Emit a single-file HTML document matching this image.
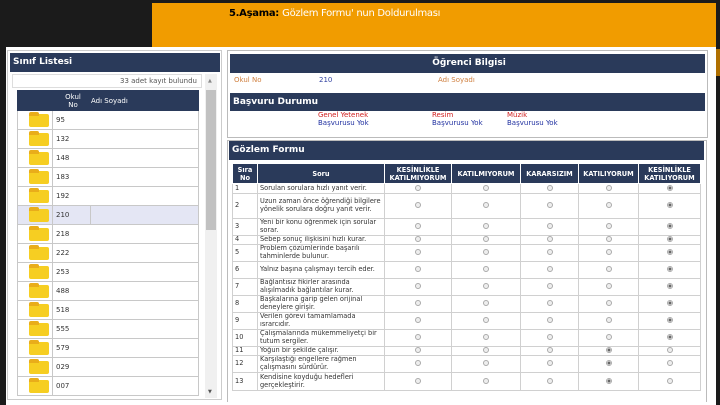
<!DOCTYPE html>
<html><head><meta charset="utf-8"><style>
*{margin:0;padding:0;box-sizing:border-box}
body{width:720px;height:405px;overflow:hidden;background:#1b1b1b;font-family:"DejaVu Sans","Liberation Sans",sans-serif;position:relative}
.abs{position:absolute}
.orange{left:152px;top:3px;width:564px;height:46px;background:#f19c00}
.title{left:229px;top:8px;font-size:10px;font-weight:bold;color:#000;letter-spacing:-0.3px}
.title span{color:#fff;font-weight:normal}
.white{left:6px;top:47px;width:710px;height:358px;background:#fff}
.hdr{background:#2a3a5a;color:#fff;font-weight:bold;font-size:9px;padding-left:3px;line-height:19px}
table{border-collapse:collapse}
.list td{border:1px solid #c8c8c8;height:19px;font-size:7px;color:#333;padding-left:3px}
.folder{width:20px;height:13px;background:#f6ce22;border-radius:2px;margin-left:8px;position:relative}
.folder:before{content:"";position:absolute;left:0;top:-2px;width:10px;height:4px;background:#e9ad1a;border-radius:2px 2px 0 0}
.form{table-layout:fixed}
.form td,.form th{border:1px solid #d0d0d0;font-size:6.6px;line-height:7.6px;color:#333;padding:0 2px;overflow:hidden}
.form th{background:#2a3a5a;color:#fff;font-weight:bold;border-color:#fff;line-height:8px}
.form td.r{text-align:center}
.rad{display:inline-block;width:6px;height:6px;border:1px solid #aaa;border-radius:50%;background:#eee;vertical-align:middle}
.rad.on{background:radial-gradient(circle,#666 0 1.3px,#eee 1.6px)}
</style></head><body>
<div class="abs orange"></div>
<div class="abs title">5.Aşama: <span>Gözlem Formu' nun Doldurulması</span></div>
<div class="abs white"></div>
<div class="abs" style="left:716px;top:49px;width:4px;height:27px;background:#b07000"></div>

<div class="abs" style="left:7px;top:50px;width:215px;height:350px;border:1px solid #ccc"></div>
<div class="abs hdr" style="left:10px;top:53px;width:210px;height:19px">Sınıf Listesi</div>
<div class="abs" style="left:12px;top:74px;width:190px;height:14px;border:1px solid #ddd;font-size:7px;color:#555;text-align:right;padding-right:4px;line-height:13px">33 adet kayıt bulundu</div>
<div class="abs" style="left:205px;top:74px;width:12px;height:324px;background:#f0f0f0"></div>
<div class="abs" style="left:206px;top:90px;width:10px;height:140px;background:#c1c1c1"></div>
<div class="abs" style="left:208px;top:78px;font-size:5px;color:#888">▲</div>
<div class="abs" style="left:208px;top:389px;font-size:5px;color:#555">▼</div>
<table class="abs list" style="left:17px;top:90px;width:182px">
<tr style="background:#2a3a5a;color:#fff"><td style="width:35px;height:20px;border-color:#2a3a5a"></td><td style="width:38px;color:#fff;text-align:center;line-height:8px;border-color:#2a3a5a">Okul<br>No</td><td style="color:#fff;padding-left:0;border-color:#2a3a5a">Adı Soyadı</td></tr>
<tr><td><div class="folder"></div></td><td colspan="2">95</td></tr>
<tr><td><div class="folder"></div></td><td colspan="2">132</td></tr>
<tr><td><div class="folder"></div></td><td colspan="2">148</td></tr>
<tr><td><div class="folder"></div></td><td colspan="2">183</td></tr>
<tr><td><div class="folder"></div></td><td colspan="2">192</td></tr>
<tr style="background:#e4e6f4"><td><div class="folder"></div></td><td>210</td><td></td></tr>
<tr><td><div class="folder"></div></td><td colspan="2">218</td></tr>
<tr><td><div class="folder"></div></td><td colspan="2">222</td></tr>
<tr><td><div class="folder"></div></td><td colspan="2">253</td></tr>
<tr><td><div class="folder"></div></td><td colspan="2">488</td></tr>
<tr><td><div class="folder"></div></td><td colspan="2">518</td></tr>
<tr><td><div class="folder"></div></td><td colspan="2">555</td></tr>
<tr><td><div class="folder"></div></td><td colspan="2">579</td></tr>
<tr><td><div class="folder"></div></td><td colspan="2">029</td></tr>
<tr><td><div class="folder"></div></td><td colspan="2">007</td></tr>
</table>

<div class="abs" style="left:227px;top:50px;width:481px;height:88px;border:1px solid #bbb"></div>
<div class="abs hdr" style="left:230px;top:54px;width:475px;height:19px;text-align:center">Öğrenci Bilgisi</div>
<div class="abs" style="left:234px;top:76px;font-size:7px;color:#d08040">Okul No</div>
<div class="abs" style="left:319px;top:76px;font-size:7px;color:#3040a0">210</div>
<div class="abs" style="left:438px;top:76px;font-size:7px;color:#d08040">Adı Soyadı</div>
<div class="abs hdr" style="left:230px;top:93px;width:475px;height:18px;line-height:18px">Başvuru Durumu</div>
<div class="abs" style="left:318px;top:111px;font-size:7px;line-height:8px;color:#d02020">Genel Yetenek<br><span style="color:#2030a0">Başvurusu Yok</span></div>
<div class="abs" style="left:432px;top:111px;font-size:7px;line-height:8px;color:#d02020">Resim<br><span style="color:#2030a0">Başvurusu Yok</span></div>
<div class="abs" style="left:507px;top:111px;font-size:7px;line-height:8px;color:#d02020">Müzik<br><span style="color:#2030a0">Başvurusu Yok</span></div>

<div class="abs" style="left:227px;top:140px;width:480px;height:262px;border:1px solid #bbb;border-bottom:none"></div>
<div class="abs hdr" style="left:229px;top:141px;width:475px;height:19px">Gözlem Formu</div>
<table class="abs form" style="left:232px;top:163px;width:469px">
<tr style="height:20px"><th style="width:25px">Sıra<br>No</th><th style="width:127px">Soru</th><th style="width:67px">KESİNLİKLE<br>KATILMIYORUM</th><th style="width:69px">KATILMIYORUM</th><th style="width:58px">KARARSIZIM</th><th style="width:60px">KATILIYORUM</th><th>KESİNLİKLE<br>KATILIYORUM</th></tr>
<tr style="height:10px"><td>1</td><td>Sorulan sorulara hızlı yanıt verir.</td><td class="r"><i class="rad"></i></td><td class="r"><i class="rad"></i></td><td class="r"><i class="rad"></i></td><td class="r"><i class="rad"></i></td><td class="r"><i class="rad on"></i></td></tr>
<tr style="height:25px"><td>2</td><td>Uzun zaman önce öğrendiği bilgilere yönelik sorulara doğru yanıt verir.</td><td class="r"><i class="rad"></i></td><td class="r"><i class="rad"></i></td><td class="r"><i class="rad"></i></td><td class="r"><i class="rad"></i></td><td class="r"><i class="rad on"></i></td></tr>
<tr style="height:17px"><td>3</td><td>Yeni bir konu öğrenmek için sorular sorar.</td><td class="r"><i class="rad"></i></td><td class="r"><i class="rad"></i></td><td class="r"><i class="rad"></i></td><td class="r"><i class="rad"></i></td><td class="r"><i class="rad on"></i></td></tr>
<tr style="height:9px"><td>4</td><td>Sebep sonuç ilişkisini hızlı kurar.</td><td class="r"><i class="rad"></i></td><td class="r"><i class="rad"></i></td><td class="r"><i class="rad"></i></td><td class="r"><i class="rad"></i></td><td class="r"><i class="rad on"></i></td></tr>
<tr style="height:17px"><td>5</td><td>Problem çözümlerinde başarılı tahminlerde bulunur.</td><td class="r"><i class="rad"></i></td><td class="r"><i class="rad"></i></td><td class="r"><i class="rad"></i></td><td class="r"><i class="rad"></i></td><td class="r"><i class="rad on"></i></td></tr>
<tr style="height:17px"><td>6</td><td>Yalnız başına çalışmayı tercih eder.</td><td class="r"><i class="rad"></i></td><td class="r"><i class="rad"></i></td><td class="r"><i class="rad"></i></td><td class="r"><i class="rad"></i></td><td class="r"><i class="rad on"></i></td></tr>
<tr style="height:17px"><td>7</td><td>Bağlantısız fikirler arasında alışılmadık bağlantılar kurar.</td><td class="r"><i class="rad"></i></td><td class="r"><i class="rad"></i></td><td class="r"><i class="rad"></i></td><td class="r"><i class="rad"></i></td><td class="r"><i class="rad on"></i></td></tr>
<tr style="height:17px"><td>8</td><td>Başkalarına garip gelen orijinal deneylere girişir.</td><td class="r"><i class="rad"></i></td><td class="r"><i class="rad"></i></td><td class="r"><i class="rad"></i></td><td class="r"><i class="rad"></i></td><td class="r"><i class="rad on"></i></td></tr>
<tr style="height:17px"><td>9</td><td>Verilen görevi tamamlamada ısrarcıdır.</td><td class="r"><i class="rad"></i></td><td class="r"><i class="rad"></i></td><td class="r"><i class="rad"></i></td><td class="r"><i class="rad"></i></td><td class="r"><i class="rad on"></i></td></tr>
<tr style="height:17px"><td>10</td><td>Çalışmalarında mükemmeliyetçi bir tutum sergiler.</td><td class="r"><i class="rad"></i></td><td class="r"><i class="rad"></i></td><td class="r"><i class="rad"></i></td><td class="r"><i class="rad"></i></td><td class="r"><i class="rad on"></i></td></tr>
<tr style="height:9px"><td>11</td><td>Yoğun bir şekilde çalışır.</td><td class="r"><i class="rad"></i></td><td class="r"><i class="rad"></i></td><td class="r"><i class="rad"></i></td><td class="r"><i class="rad on"></i></td><td class="r"><i class="rad"></i></td></tr>
<tr style="height:17px"><td>12</td><td>Karşılaştığı engellere rağmen çalışmasını sürdürür.</td><td class="r"><i class="rad"></i></td><td class="r"><i class="rad"></i></td><td class="r"><i class="rad"></i></td><td class="r"><i class="rad on"></i></td><td class="r"><i class="rad"></i></td></tr>
<tr style="height:18px"><td>13</td><td>Kendisine koyduğu hedefleri gerçekleştirir.</td><td class="r"><i class="rad"></i></td><td class="r"><i class="rad"></i></td><td class="r"><i class="rad"></i></td><td class="r"><i class="rad on"></i></td><td class="r"><i class="rad"></i></td></tr>
</table>
</body></html>
